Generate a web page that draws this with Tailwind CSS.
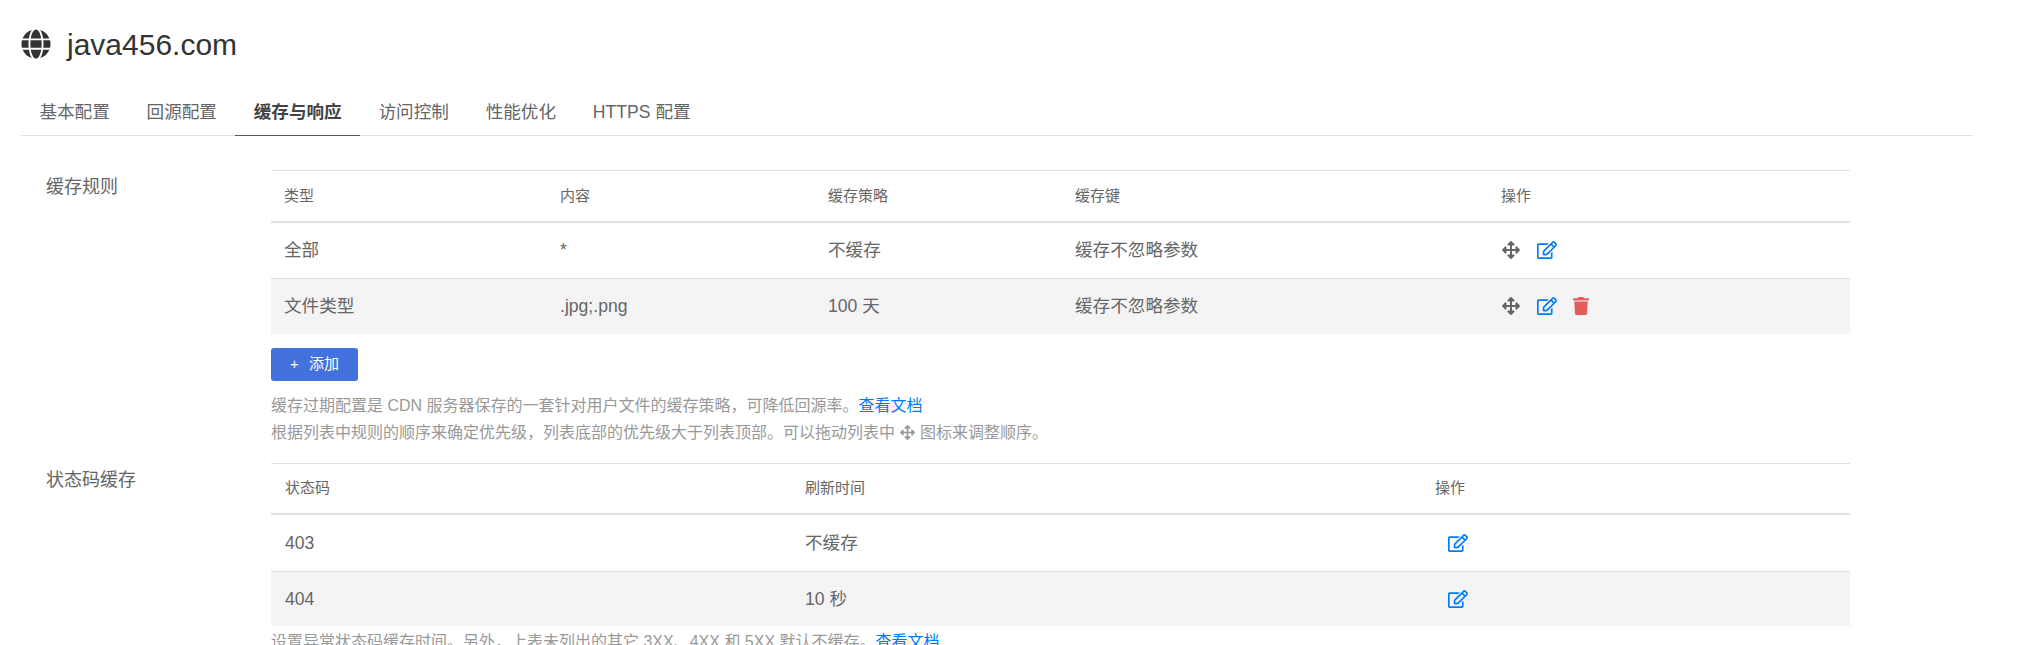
<!DOCTYPE html>
<html lang="zh-CN">

<head>
  <meta charset="UTF-8">
  <title>java456.com</title>
  <script src="https://cdn.jsdelivr.net/npm/@tailwindcss/browser@4"></script>
</head>

<body class="bg-white">
  <div class="h-[645px] overflow-hidden px-[21px] font-['Liberation_Sans','Noto_Sans_CJK_SC',sans-serif] text-[#666]">
    <div class="flex h-[90px] items-center gap-[16px] pb-[2px] text-[30px] text-[#333]">
      <svg class="h-[30px] w-[30px] fill-[#333]" viewBox="0 0 496 512"><path d="M336.5 160C322 70.7 287.8 8 248 8s-74 62.7-88.5 152h177zM152 256c0 22.2 1.2 43.5 3.3 64h185.3c2.1-20.5 3.3-41.8 3.3-64s-1.2-43.5-3.3-64H155.3c-2.1 20.5-3.3 41.8-3.3 64zm324.7-96c-28.6-67.9-86.5-120.4-158-141.6 24.4 33.8 41.2 84.7 50 141.6h108zM177.2 18.4C105.8 39.6 47.8 92.1 19.3 160h108c8.7-56.9 25.5-107.8 49.9-141.6zM487.4 192H372.7c2.1 21 3.3 42.5 3.3 64s-1.2 43-3.3 64h114.6c5.5-20.5 8.6-41.8 8.6-64s-3.1-43.5-8.5-64zM120 256c0-21.5 1.2-43 3.3-64H8.6C3.2 212.5 0 233.8 0 256s3.2 43.5 8.6 64h114.6c-2-21-3.2-42.5-3.2-64zm39.5 96c14.5 89.3 48.7 152 88.5 152s74-62.7 88.5-152h-177zm159.3 141.6c71.4-21.2 129.4-73.7 158-141.6h-108c-8.8 56.9-25.6 107.8-50 141.6zM19.3 352c28.6 67.9 86.5 120.4 158 141.6-24.4-33.8-41.2-84.7-50-141.6h-108z"/></svg>
      <span>java456.com</span>
    </div>

    <div class="flex h-[46px] w-[1952px] border-b border-[#dee2e6] text-[17.6px]">
      <a class="flex items-center px-[18.4px]">基本配置</a>
      <a class="flex items-center px-[18.4px]">回源配置</a>
      <a class="-mb-px flex items-center border-b border-[#555] px-[18.4px] font-bold text-[#444]">缓存与响应</a>
      <a class="flex items-center px-[18.4px]">访问控制</a>
      <a class="flex items-center px-[18.4px]">性能优化</a>
      <a class="flex items-center px-[18.4px]">HTTPS 配置</a>
    </div>

    <div class="mt-[34px] flex">
      <div class="w-[250px] pl-[25px] pt-[5px] text-[18px] leading-[24px]">缓存规则</div>
      <div class="w-[1579px]">
        <table class="w-full table-fixed border-collapse text-left">
          <thead>
            <tr class="h-[51px] border-t border-b-2 border-[#dee2e6] text-[15px]">
              <th class="w-[276px] pl-[13px] font-normal">类型</th>
              <th class="w-[268px] pl-[13px] font-normal">内容</th>
              <th class="w-[247px] pl-[13px] font-normal">缓存策略</th>
              <th class="w-[426px] pl-[13px] font-normal">缓存键</th>
              <th class="pl-[13px] font-normal">操作</th>
            </tr>
          </thead>
          <tbody class="text-[17.6px]">
            <tr class="h-[57px] border-b border-[#dee2e6]">
              <td class="pl-[13px]">全部</td>
              <td class="pl-[13px]">*</td>
              <td class="pl-[13px]">不缓存</td>
              <td class="pl-[13px]">缓存不忽略参数</td>
              <td class="pl-[14px]">
                <div class="flex items-center">
                  <svg class="h-[18px] w-[18px] fill-[#666]" viewBox="0 0 512 512"><path d="M352.201 425.775l-79.196 79.196c-9.373 9.373-24.568 9.373-33.941 0l-79.196-79.196c-15.119-15.119-4.411-40.971 16.971-40.97h51.162L228 284H127.196v51.162c0 21.382-25.851 32.09-40.971 16.971L7.029 272.937c-9.373-9.373-9.373-24.569 0-33.941L86.225 159.8c15.119-15.119 40.971-4.411 40.971 16.971V228H228V127.196h-51.23c-21.382 0-32.09-25.851-16.971-40.971l79.196-79.196c9.373-9.373 24.568-9.373 33.941 0l79.196 79.196c15.119 15.119 4.411 40.971-16.971 40.971h-51.162V228h100.804v-51.162c0-21.382 25.851-32.09 40.97-16.971l79.196 79.196c9.373 9.373 9.373 24.569 0 33.941L425.773 352.2c-15.119 15.119-40.971 4.411-40.97-16.971V284H284v100.804h51.23c21.382 0 32.09 25.851 16.971 40.971z"/></svg>
                  <svg class="ml-[17px] h-[18px] w-[20px] fill-[#007bff]" viewBox="0 0 576 512"><path d="M402.3 344.9l32-32c5-5 13.7-1.5 13.7 5.7V464c0 26.5-21.5 48-48 48H48c-26.5 0-48-21.5-48-48V112c0-26.5 21.5-48 48-48h273.5c7.1 0 10.7 8.6 5.7 13.7l-32 32c-1.5 1.5-3.5 2.3-5.7 2.3H48v352h352V350.5c0-2.1.8-4.1 2.3-5.6zm156.6-201.8L296.3 405.7l-90.4 10c-26.2 2.9-48.5-19.2-45.6-45.6l10-90.4L432.9 17.1c22.9-22.9 59.9-22.9 82.7 0l43.2 43.2c22.9 22.9 22.9 60 .1 82.8zM460.1 174L402 115.9 216.2 301.8l-7.3 65.3 65.3-7.3L460.1 174zm64.8-79.7l-43.2-43.2c-4.1-4.1-10.8-4.1-14.8 0L436 82l58.1 58.1 30.9-30.9c4-4.2 4-10.8-.1-14.9z"/></svg>
                </div>
              </td>
            </tr>
            <tr class="h-[55px] bg-[#f4f4f4]">
              <td class="pl-[13px]">文件类型</td>
              <td class="pl-[13px]">.jpg;.png</td>
              <td class="pl-[13px]">100 天</td>
              <td class="pl-[13px]">缓存不忽略参数</td>
              <td class="pl-[14px]">
                <div class="flex items-center">
                  <svg class="h-[18px] w-[18px] fill-[#666]" viewBox="0 0 512 512"><path d="M352.201 425.775l-79.196 79.196c-9.373 9.373-24.568 9.373-33.941 0l-79.196-79.196c-15.119-15.119-4.411-40.971 16.971-40.97h51.162L228 284H127.196v51.162c0 21.382-25.851 32.09-40.971 16.971L7.029 272.937c-9.373-9.373-9.373-24.569 0-33.941L86.225 159.8c15.119-15.119 40.971-4.411 40.971 16.971V228H228V127.196h-51.23c-21.382 0-32.09-25.851-16.971-40.971l79.196-79.196c9.373-9.373 24.568-9.373 33.941 0l79.196 79.196c15.119 15.119 4.411 40.971-16.971 40.971h-51.162V228h100.804v-51.162c0-21.382 25.851-32.09 40.97-16.971l79.196 79.196c9.373 9.373 9.373 24.569 0 33.941L425.773 352.2c-15.119 15.119-40.971 4.411-40.97-16.971V284H284v100.804h51.23c21.382 0 32.09 25.851 16.971 40.971z"/></svg>
                  <svg class="ml-[17px] h-[18px] w-[20px] fill-[#007bff]" viewBox="0 0 576 512"><path d="M402.3 344.9l32-32c5-5 13.7-1.5 13.7 5.7V464c0 26.5-21.5 48-48 48H48c-26.5 0-48-21.5-48-48V112c0-26.5 21.5-48 48-48h273.5c7.1 0 10.7 8.6 5.7 13.7l-32 32c-1.5 1.5-3.5 2.3-5.7 2.3H48v352h352V350.5c0-2.1.8-4.1 2.3-5.6zm156.6-201.8L296.3 405.7l-90.4 10c-26.2 2.9-48.5-19.2-45.6-45.6l10-90.4L432.9 17.1c22.9-22.9 59.9-22.9 82.7 0l43.2 43.2c22.9 22.9 22.9 60 .1 82.8zM460.1 174L402 115.9 216.2 301.8l-7.3 65.3 65.3-7.3L460.1 174zm64.8-79.7l-43.2-43.2c-4.1-4.1-10.8-4.1-14.8 0L436 82l58.1 58.1 30.9-30.9c4-4.2 4-10.8-.1-14.9z"/></svg>
                  <svg class="ml-[16px] h-[18px] w-[16px] fill-[#e55c5c]" viewBox="0 0 448 512"><path d="M432 32H312l-9.4-18.7A24 24 0 0 0 281.1 0H166.8a23.72 23.72 0 0 0-21.4 13.3L136 32H16A16 16 0 0 0 0 48v32a16 16 0 0 0 16 16h416a16 16 0 0 0 16-16V48a16 16 0 0 0-16-16zM53.2 467a48 48 0 0 0 47.9 45h245.8a48 48 0 0 0 47.9-45L416 128H32z"/></svg>
                </div>
              </td>
            </tr>
          </tbody>
        </table>

        <button class="mt-[14px] flex h-[33px] w-[87px] items-center justify-center gap-[10px] rounded-[3px] bg-[#4472dc] text-[15px] text-white">
          <span>+</span><span>添加</span>
        </button>

        <div class="mt-[11px] text-[16px] leading-[27px] text-[#999]">
          <p>缓存过期配置是 CDN 服务器保存的一套针对用户文件的缓存策略，可降低回源率。<a class="text-[#007bff]">查看文档</a></p>
          <p class="flex items-center">根据列表中规则的顺序来确定优先级，列表底部的优先级大于列表顶部。可以拖动列表中
            <svg class="mx-[5px] h-[15px] w-[15px] fill-[#999]" viewBox="0 0 512 512"><path d="M352.201 425.775l-79.196 79.196c-9.373 9.373-24.568 9.373-33.941 0l-79.196-79.196c-15.119-15.119-4.411-40.971 16.971-40.97h51.162L228 284H127.196v51.162c0 21.382-25.851 32.09-40.971 16.971L7.029 272.937c-9.373-9.373-9.373-24.569 0-33.941L86.225 159.8c15.119-15.119 40.971-4.411 40.971 16.971V228H228V127.196h-51.23c-21.382 0-32.09-25.851-16.971-40.971l79.196-79.196c9.373-9.373 24.568-9.373 33.941 0l79.196 79.196c15.119 15.119 4.411 40.971-16.971 40.971h-51.162V228h100.804v-51.162c0-21.382 25.851-32.09 40.97-16.971l79.196 79.196c9.373 9.373 9.373 24.569 0 33.941L425.773 352.2c-15.119 15.119-40.971 4.411-40.97-16.971V284H284v100.804h51.23c21.382 0 32.09 25.851 16.971 40.971z"/></svg>
            图标来调整顺序。</p>
        </div>
      </div>
    </div>

    <div class="mt-[17px] flex">
      <div class="w-[250px] pl-[25px] pt-[5px] text-[18px] leading-[24px]">状态码缓存</div>
      <div class="w-[1579px]">
        <table class="w-full table-fixed border-collapse text-left">
          <thead>
            <tr class="h-[51px] border-t border-b-2 border-[#dee2e6] text-[15px]">
              <th class="w-[521px] pl-[14px] font-normal">状态码</th>
              <th class="w-[630px] pl-[13px] font-normal">刷新时间</th>
              <th class="pl-[13px] font-normal">操作</th>
            </tr>
          </thead>
          <tbody class="text-[17.6px]">
            <tr class="h-[57px] border-b border-[#dee2e6]">
              <td class="pl-[14px]">403</td>
              <td class="pl-[13px]">不缓存</td>
              <td class="pl-[26px]">
                <svg class="h-[18px] w-[20px] fill-[#007bff]" viewBox="0 0 576 512"><path d="M402.3 344.9l32-32c5-5 13.7-1.5 13.7 5.7V464c0 26.5-21.5 48-48 48H48c-26.5 0-48-21.5-48-48V112c0-26.5 21.5-48 48-48h273.5c7.1 0 10.7 8.6 5.7 13.7l-32 32c-1.5 1.5-3.5 2.3-5.7 2.3H48v352h352V350.5c0-2.1.8-4.1 2.3-5.6zm156.6-201.8L296.3 405.7l-90.4 10c-26.2 2.9-48.5-19.2-45.6-45.6l10-90.4L432.9 17.1c22.9-22.9 59.9-22.9 82.7 0l43.2 43.2c22.9 22.9 22.9 60 .1 82.8zM460.1 174L402 115.9 216.2 301.8l-7.3 65.3 65.3-7.3L460.1 174zm64.8-79.7l-43.2-43.2c-4.1-4.1-10.8-4.1-14.8 0L436 82l58.1 58.1 30.9-30.9c4-4.2 4-10.8-.1-14.9z"/></svg>
              </td>
            </tr>
            <tr class="h-[55px] bg-[#f4f4f4]">
              <td class="pl-[14px]">404</td>
              <td class="pl-[13px]">10 秒</td>
              <td class="pl-[26px]">
                <svg class="h-[18px] w-[20px] fill-[#007bff]" viewBox="0 0 576 512"><path d="M402.3 344.9l32-32c5-5 13.7-1.5 13.7 5.7V464c0 26.5-21.5 48-48 48H48c-26.5 0-48-21.5-48-48V112c0-26.5 21.5-48 48-48h273.5c7.1 0 10.7 8.6 5.7 13.7l-32 32c-1.5 1.5-3.5 2.3-5.7 2.3H48v352h352V350.5c0-2.1.8-4.1 2.3-5.6zm156.6-201.8L296.3 405.7l-90.4 10c-26.2 2.9-48.5-19.2-45.6-45.6l10-90.4L432.9 17.1c22.9-22.9 59.9-22.9 82.7 0l43.2 43.2c22.9 22.9 22.9 60 .1 82.8zM460.1 174L402 115.9 216.2 301.8l-7.3 65.3 65.3-7.3L460.1 174zm64.8-79.7l-43.2-43.2c-4.1-4.1-10.8-4.1-14.8 0L436 82l58.1 58.1 30.9-30.9c4-4.2 4-10.8-.1-14.9z"/></svg>
              </td>
            </tr>
          </tbody>
        </table>
        <p class="mt-[2px] text-[16px] leading-[27px] text-[#999]">设置异常状态码缓存时间。另外，上表未列出的其它 3XX、4XX 和 5XX 默认不缓存。<a class="text-[#007bff]">查看文档</a></p>
      </div>
    </div>
  </div>
</body>

</html>
